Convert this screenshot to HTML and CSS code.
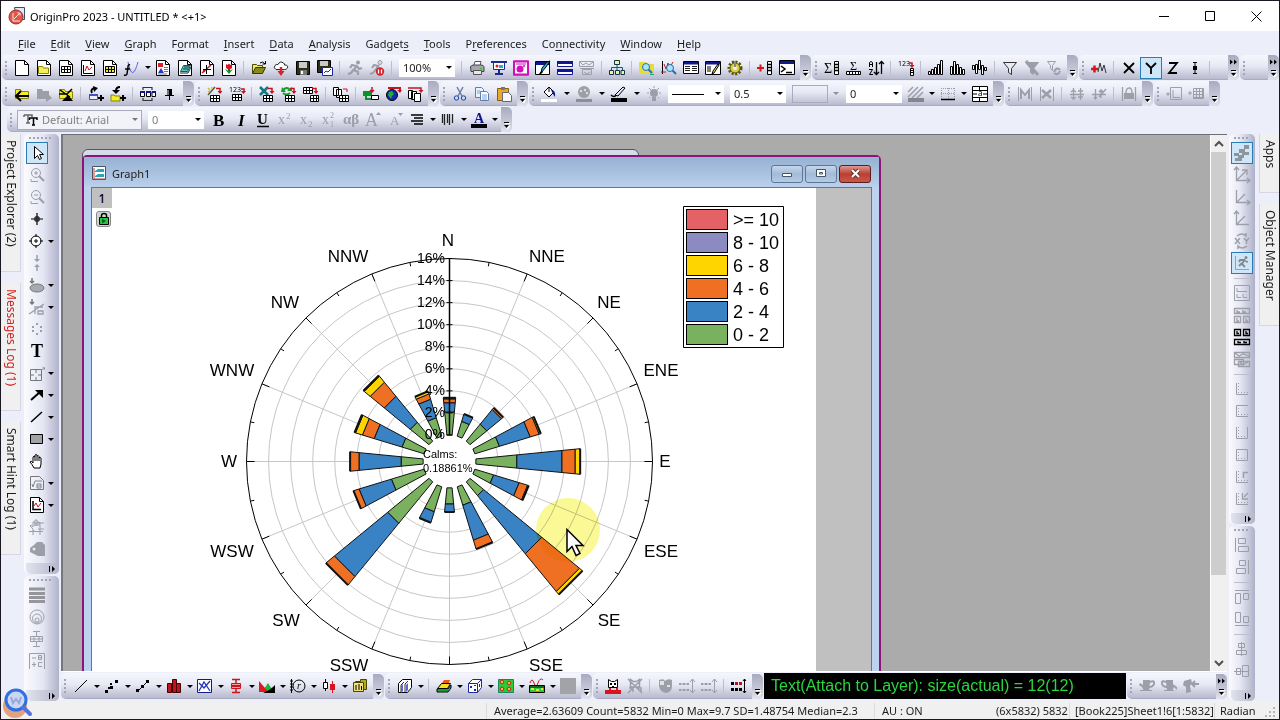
FILE: index.html
```html
<!DOCTYPE html>
<html lang="en">
<head>
    <meta charset="UTF-8">
    <meta name="viewport" content="width=device-width, initial-scale=1.0">
    <title>OriginPro 2023 - UNTITLED</title>
    <link rel="stylesheet" href="styles.css">
</head>
<body>

    <header class="titlebar">
        <svg class="app-icon" width="18" height="18" viewBox="0 0 18 18">
            <path d="M6.500.5h10v12h-8z" fill="#dfe8f4" stroke="#3c4a6c"/>
            <circle cx="8" cy="10" r="7" fill="#e2574c" stroke="#9c2a24"/>
            <path d="M5 6v8h7M6 12l6-6M9.500 6h2.500v2.500" fill="none" stroke="#ffe3df"/>
        </svg>
        <h1>OriginPro 2023 - UNTITLED * &lt;+1&gt;</h1>
        <div class="window-controls">
            <button type="button" aria-label="Minimize"><svg width="11" height="11"><path d="M0 5.500h10" stroke="#000"/></svg></button>
            <button type="button" aria-label="Maximize"><svg width="11" height="11"><path d="M.5.5h9v9h-9z" fill="none" stroke="#000"/></svg></button>
            <button type="button" aria-label="Close"><svg width="11" height="11"><path d="M.5.5l10 10M10.500.5l-10 10" stroke="#000"/></svg></button>
        </div>
    </header>

    <nav class="menubar">
        <a href="#"><u>F</u>ile</a>
        <a href="#"><u>E</u>dit</a>
        <a href="#"><u>V</u>iew</a>
        <a href="#"><u>G</u>raph</a>
        <a href="#">F<u>o</u>rmat</a>
        <a href="#"><u>I</u>nsert</a>
        <a href="#"><u>D</u>ata</a>
        <a href="#"><u>A</u>nalysis</a>
        <a href="#">Gadget<u>s</u></a>
        <a href="#"><u>T</u>ools</a>
        <a href="#">P<u>r</u>eferences</a>
        <a href="#">Co<u>n</u>nectivity</a>
        <a href="#"><u>W</u>indow</a>
        <a href="#"><u>H</u>elp</a>
    </nav>

    <section class="toolrows">
        <div class="toolrow">
            <div class="toolbar" role="toolbar" aria-label="Standard">
                <div class="tools" data-tools="new new-folder new-book new-graph new-matrix new-function~ new-layout new-notes digitize new-image | open open-cloud save save-as | run stop |"></div>
                <label class="combo"><select aria-label="Zoom"><option>100%</option></select></label>
                <div class="tools" data-tools="| print slideshow apps explorer tile split | hierarchy | find zoom-graph results edit-table gear | add-column command"></div>
                <button type="button" class="more" aria-label="More Standard tools"></button>
            </div>
            <div class="toolbar" role="toolbar" aria-label="Column">
                <div class="tools" data-tools="column-stats row-stats sort | set-values | bars-up bars-down bars-mixed | filter filter-off filter-again"></div>
                <button type="button" class="more" aria-label="More Column tools"></button>
            </div>
            <div class="toolbar" role="toolbar" aria-label="Axis">
                <div class="tools" data-tools="add-plot | axis-x axis-y* axis-z error-bar |"></div>
                <button type="button" class="more wide push" aria-label="More Axis tools"></button>
            </div>
            <div class="toolbar" role="toolbar" aria-label="Extra">
                <div class="tools stub"></div>
                <button type="button" class="more wide" aria-label="More Extra tools"></button>
            </div>
        </div>

        <div class="toolrow">
            <div class="toolbar" role="toolbar" aria-label="Navigate">
                <div class="tools" data-tools="back forward up-folder | move-up move-down | arrange pin"></div>
                <button type="button" class="more" aria-label="More Navigate tools"></button>
            </div>
            <div class="toolbar" role="toolbar" aria-label="Import">
                <div class="tools" data-tools="import-wizard import-ascii | import-excel reimport import-multi | copy-sheets | connect-file connect-web connect-many"></div>
                <button type="button" class="more" aria-label="More Import tools"></button>
            </div>
            <div class="toolbar" role="toolbar" aria-label="Edit">
                <div class="tools" data-tools="cut copy paste"></div>
                <button type="button" class="more" aria-label="More Edit tools"></button>
            </div>
            <div class="toolbar pickers" role="toolbar" aria-label="Style">
                <div class="tools" data-tools="fill-color~ palette~ line-color~ light"></div>
                <label class="combo line"><select aria-label="Line style"><option></option></select></label>
                <label class="combo"><select aria-label="Line width"><option>0.5</option></select></label>
                <label class="combo off"><select aria-label="Pattern" disabled><option></option></select></label>
                <label class="combo"><select aria-label="Pattern width"><option>0</option></select></label>
                <div class="tools tail" data-tools="hatch~ borders~ merge"></div>
                <button type="button" class="more" aria-label="More Style tools"></button>
            </div>
            <div class="toolbar" role="toolbar" aria-label="Mask">
                <div class="tools" data-tools="mask-range unmask | mask-in mask-out | lock-mask"></div>
                <button type="button" class="more" aria-label="More Mask tools"></button>
            </div>
            <div class="toolbar" role="toolbar" aria-label="Insert">
                <div class="tools" data-tools="insert-graph insert-sheet"></div>
                <button type="button" class="more" aria-label="More Insert tools"></button>
            </div>
        </div>

        <div class="toolrow format-row">
            <div class="toolbar" role="toolbar" aria-label="Format">
                <label class="combo font"><svg width="14" height="12" viewBox="0 0 14 12"><path d="M0 1h8v2M4 1v8M2 9h4M0 1v2" fill="none" stroke="#666" stroke-width="1.500"/><path d="M5 4h8v2M9.500 4v7M8 11h3M5.500 4v2" fill="none" stroke="#000" stroke-width="1.500"/></svg><select aria-label="Font"><option>Default: Arial</option></select></label>
                <label class="combo size"><select aria-label="Font size"><option>0</option></select></label>
                <div class="tools" data-tools="bold italic underline superscript subscript supersub greek larger smaller align~ orientation~ font-color~"></div>
                <button type="button" class="more" aria-label="More Format tools"></button>
            </div>
        </div>
    </section>

    <main class="workspace">
        <nav class="tabs left">
            <a href="#">Project Explorer (2)</a>
            <a href="#" class="alert">Messages Log (1)</a>
            <a href="#">Smart Hint Log (1)</a>
        </nav>

        <div class="dock left">
            <div class="toolbar vertical" role="toolbar" aria-label="Tools">
                <div class="tools" data-tools="pointer* zoom-in zoom-out crosshair target~ move-points select-oval~ select-line~ scatter-points text insert-object~ arrow~ line~ rectangle~ pan equation~ mini-graph~ pan-axis label"></div>
                <button type="button" class="more side" aria-label="More Tools"></button>
            </div>
            <div class="toolbar vertical fill" role="toolbar" aria-label="Gadget">
                <div class="tools" data-tools="bars-gray circles box-gray formula-gray"></div>
                <button type="button" class="more side" aria-label="More Gadget tools"></button>
            </div>
        </div>

        <div class="center">
            <div class="mdi-row">
                <div class="mdi">
                    <div class="child back-window"></div>
                    <section class="child graph-window">
                        <header class="child-title">
                            <svg width="15" height="15" viewBox="0 0 15 15"><path d="M.5.5h13v13h-13z" fill="#fff" stroke="#456"/><path d="M3 5l3-2h6v3H3z" fill="#22aab8"/><path d="M3 10l3-2h6v3H3z" fill="#22aab8"/><path d="M2 2v11M2 13h11" stroke="#c33"/></svg>
                            <h2>Graph1</h2>
                            <button type="button" aria-label="Minimize Graph1"><svg width="12" height="8"><path d="M1.500 3.500h9v3h-9z" fill="#fff" stroke="#456"/></svg></button>
                            <button type="button" aria-label="Maximize Graph1"><svg width="12" height="9"><path d="M1.500.5h9v7h-9zM4.500 3.500h3v1.500h-3z" fill="#fff" stroke="#456"/></svg></button>
                            <button type="button" class="close" aria-label="Close Graph1"><svg width="11" height="9"><path d="M2 1l7 7M9 1L2 8" stroke="#633" stroke-width="4"/><path d="M2 1l7 7M9 1L2 8" stroke="#fff" stroke-width="2"/></svg></button>
                        </header>
                        <div class="child-client">
                            <div class="sheet">
                                <div class="layer-bar">
                                    <button type="button" class="layer">1</button>
                                    <button type="button" class="lock" aria-label="Lock"><svg width="12" height="14"><path d="M3.500 6V3.500q0-2 2.500-2t2.500 2V6" fill="none" stroke="#000" stroke-width="1.500"/><path d="M1.500 5.500h9v7h-9z" fill="#2bc43a" stroke="#000"/><path d="M4 6.500l4 2.500-4 2.500z" fill="#063"/></svg></button>
                                </div>
                                <svg id="rose" class="rose" width="725" height="560" role="img" aria-label="Wind rose"></svg>
                            </div>
                        </div>
                    </section>
                </div>
                <div class="scrollbar">
                    <button type="button" aria-label="Scroll up"><svg width="10" height="8"><path d="M1 6l4-4 4 4" fill="none" stroke="#505050" stroke-width="2"/></svg></button>
                    <div class="thumb"></div>
                    <button type="button" aria-label="Scroll down"><svg width="10" height="8"><path d="M1 2l4 4 4-4" fill="none" stroke="#505050" stroke-width="2"/></svg></button>
                </div>
            </div>

            <div class="toolrow bottom">
                <div class="toolbar" role="toolbar" aria-label="2D Graphs">
                    <div class="tools" data-tools="plot-line~ plot-scatter~ plot-symbol~ plot-column~ plot-multi~ plot-box~ plot-area~ plot-polar~ plot-stock~ templates"></div>
                    <button type="button" class="more" aria-label="More 2D Graphs"></button>
                </div>
                <div class="toolbar" role="toolbar" aria-label="3D Graphs">
                    <div class="tools" data-tools="bars-3d~ | surface~ cube~ contour~ profile~ blank"></div>
                    <button type="button" class="more" aria-label="More 3D Graphs"></button>
                </div>
                <div class="toolbar" role="toolbar" aria-label="Mask Points">
                    <div class="tools" data-tools="mask-cat mask-cat-off | mask-face swap-a swap-b | swap-on"></div>
                    <button type="button" class="more" aria-label="More Mask Points"></button>
                </div>
                <output class="readout">Text(Attach to Layer): size(actual) = 12(12)</output>
                <div class="toolbar" role="toolbar" aria-label="Database">
                    <div class="tools" data-tools="cup-a cup-b cup-c"></div>
                    <button type="button" class="more wide push" aria-label="More Database"></button>
                </div>
            </div>
        </div>

        <div class="dock right">
            <div class="toolbar vertical" role="toolbar" aria-label="Graph">
                <div class="tools" data-tools="stairs* axes-both axes-x axes-y swap-xy speed* | layers-1 layers-2 layers-3 layers-4 | frame-l frame-c frame-u frame-d frame-i frame-s"></div>
                <button type="button" class="more side" aria-label="More Graph tools"></button>
            </div>
            <div class="toolbar vertical fill" role="toolbar" aria-label="Object Edit">
                <div class="tools" data-tools="align-left align-right | align-top align-bottom | align-center align-middle"></div>
                <button type="button" class="more side" aria-label="More Object Edit tools"></button>
            </div>
        </div>

        <nav class="tabs right">
            <a href="#">Apps</a>
            <a href="#">Object Manager</a>
        </nav>
    </main>

    <footer class="statusbar">
        <span class="stats">Average=2.63609 Count=5832 Min=0 Max=9.7 SD=1.48754 Median=2.3</span>
        <span class="units">AU : ON</span>
        <span class="cells">(6x5832) 5832</span>
        <span class="book">[Book225]Sheet1!6[1:5832]</span>
        <span class="angle">Radian</span>
        <svg class="grip" width="12" height="12"><path d="M8 0h2v2H8zM4 4h2v2H4zM8 4h2v2H8zM0 8h2v2H0zM4 8h2v2H4zM8 8h2v2H8z" fill="#b4b4b4"/></svg>
    </footer>

    <svg class="magnifier" width="32" height="32" viewBox="0 0 32 32">
        <circle cx="13" cy="19" r="12" fill="#e0a283"/>
        <circle cx="14" cy="13" r="10" fill="#c9d6f4" stroke="#2f6fe0" stroke-width="3"/>
        <path d="M9 10l2 6 3-4 3 4 2-6" fill="none" stroke="#9aa7d8" stroke-width="2"/>
        <path d="M22 21l6 6" stroke="#5674d8" stroke-width="4" stroke-linecap="round"/>
    </svg>

    <script src="icons.js"></script>
    <script src="rose.js"></script>
</body>
</html>
```
FILE: styles.css
```css
* {
    margin: 0;
    padding: 0;
    box-sizing: border-box;
}

body {
    font-family: 'Noto Sans', 'Open Sans', sans-serif;
    font-size: 12px;
    color: #1c1c1c;
    background: #eceefa;
    border: 1px solid #1a1720;
    height: 100vh;
    display: flex;
    flex-direction: column;
    overflow: hidden;
    position: relative;
}

button {
    font: inherit;
    border: none;
    background: none;
    display: flex;
    align-items: center;
    justify-content: center;
    flex: none;
}

a {
    color: inherit;
    text-decoration: none;
}

svg {
    display: block;
    flex: none;
    overflow: visible;
}

/* title bar */
.titlebar {
    height: 30px;
    flex: none;
    background: #fff;
    display: flex;
    align-items: center;
    padding-left: 7px;
    gap: 4px;
}

.titlebar h1 {
    font-size: 11px;
    font-weight: 400;
    color: #000;
    flex: 1;
}

.window-controls {
    display: flex;
}

.window-controls button {
    width: 46px;
    height: 29px;
}

/* menu */
.menubar {
    height: 24px;
    flex: none;
    display: flex;
    align-items: center;
    gap: 15px;
    padding-left: 17px;
    font-size: 11px;
}

.menubar u {
    text-underline-offset: 2px;
}

/* toolbars */
.toolrow {
    height: 26px;
    display: flex;
    gap: 1px;
    padding-left: 1px;
    flex: none;
}

.format-row {
    height: 27px;
    padding-left: 6px;
}

.toolbar {
    display: flex;
    align-items: center;
    height: 25px;
    flex: none;
    padding-left: 9px;
    border-radius: 5px;
    background: linear-gradient(#f6f7fd, #e6e8f4 45%, #b9bbcf 95%, #9fa1b8);
    position: relative;
}

.toolbar::before {
    content: '';
    position: absolute;
    left: 3px;
    top: 6px;
    width: 2px;
    height: 14px;
    background: repeating-linear-gradient(#a3a4b8 0 2px, transparent 2px 4px);
}

.tools {
    display: flex;
    align-items: center;
}

.tools.stub {
    width: 17px;
}

.tool {
    width: 22px;
    height: 22px;
    font-size: 16px;
}

.tool.active {
    background: #cfe6f8;
    border: 1px solid #2a7cb4;
}

.item {
    display: flex;
}

.drop {
    width: 9px;
}

.drop::after,
.combo::after {
    content: '';
    border: 3px solid transparent;
    border-top-color: #000;
    border-bottom: none;
}

.pickers .drop {
    width: 13px;
}

.pickers .tail .drop {
    width: 10px;
}

.separator {
    width: 1px;
    height: 14px;
    margin: 0 4px 0 3px;
    background: #bcbed0;
}

.more {
    width: 11px;
    height: 25px;
    margin-left: 2px;
    padding-bottom: 3px;
    align-items: flex-end;
    border-radius: 0 5px 5px 0;
    background: linear-gradient(#a9aac0, #c6c8d8 60%, #e2e3ee);
}

.more.wide {
    padding: 4px 0 3px;
    flex-direction: column;
    align-items: center;
    justify-content: space-between;
}

.more.push {
    margin-left: 14px;
}

.combo {
    width: 56px;
    height: 18px;
    background: #fff;
    display: flex;
    align-items: center;
    padding-right: 3px;
    margin: 0 3px;
}

.combo::after {
    margin-left: 2px;
    flex: none;
}

.combo select {
    appearance: none;
    flex: 1;
    width: 0;
    height: 18px;
    border: none;
    background: none;
    font: inherit;
    font-size: 11px;
    color: #1c1c1c;
    padding-left: 4px;
    opacity: 1;
}

.combo.line select {
    background: linear-gradient(#000, #000) 4px 9px / 32px 1px no-repeat;
}

.combo.off {
    width: 48px;
    background: none;
}

.combo.off select {
    flex: none;
    width: 36px;
    border: 1px solid #a9abbd;
}

.combo.off::after {
    margin-left: 5px;
    border-top-color: #8d8f9c;
}

.combo.font {
    width: 125px;
    height: 20px;
    background: #f2f3f8;
    border: 1px solid #a9abbd;
    margin: 0 3px 0 1px;
    padding-left: 6px;
}

.combo.font::after {
    border-top-color: #777;
}

.combo.font select,
.combo.size select {
    color: #808080;
}

.combo.size {
    margin-right: 4px;
}

/* workspace */
.workspace {
    flex: 1;
    min-height: 0;
    display: flex;
}

.tabs {
    width: 23px;
    flex: none;
    display: flex;
    flex-direction: column;
    align-items: flex-start;
    gap: 11px;
}

.tabs a {
    writing-mode: vertical-rl;
    width: 20px;
    line-height: 18px;
    padding: 6px 0 24px;
    background: #f0f0f1;
    border-right: 1px solid #d6d6e4;
    border-bottom: 1px solid #d6d6e4;
}

.tabs .alert {
    color: #d21f1f;
}

.tabs.right {
    width: 24px;
    align-items: flex-end;
    padding-left: 3px;
}

.tabs.right a {
    border-right: none;
    border-left: 1px solid #d6d6e4;
}

.dock {
    flex: none;
    display: flex;
    flex-direction: column;
    gap: 2px;
}

.dock.left {
    width: 37px;
}

.dock.right {
    width: 26px;
    margin-left: 2px;
}

.vertical {
    flex-direction: column;
    align-items: flex-start;
    width: 35px;
    height: auto;
    padding: 8px 0 0 2px;
    background: linear-gradient(90deg, #fbfbfe, #e4e6f3 55%, #b0b2ca);
}

.dock.right .vertical {
    width: 26px;
    background: linear-gradient(90deg, #fbfbfe, #e4e6f3 45%, #aeb0c8);
}

.vertical::before {
    left: 5px;
    top: 3px;
    width: 22px;
    height: 2px;
    background: repeating-linear-gradient(90deg, #a3a4b8 0 2px, transparent 2px 4px);
}

.dock.right .vertical::before {
    width: 15px;
}

.vertical .tools {
    flex-direction: column;
    align-items: flex-start;
}

.vertical .drop {
    width: 6px;
}

.vertical .separator {
    width: 16px;
    height: 1px;
    margin: 4px 3px 3px;
}

.vertical.fill {
    flex: 1;
}

.more.side {
    width: 100%;
    height: 11px;
    padding: 0 3px 0 0;
    margin: 3px 0 0;
    align-items: center;
    justify-content: flex-end;
    border-radius: 0 0 5px 5px;
    background: linear-gradient(90deg, #e2e3ee, #b4b6ca);
}

.fill .more.side {
    margin-top: auto;
}

.center {
    flex: 1;
    min-width: 0;
    display: flex;
    flex-direction: column;
}

.mdi-row {
    flex: 1;
    min-height: 0;
    display: flex;
    border-top: 1px solid #6d6d75;
    border-left: 2px solid #77777d;
}

.mdi {
    flex: 1;
    position: relative;
    overflow: hidden;
    background: #ababab;
}

.child {
    position: absolute;
}

.back-window {
    left: 19px;
    top: 14px;
    width: 557px;
    height: 40px;
    background: #d5dcea;
    border: 1px solid #55555f;
    border-radius: 6px 6px 0 0;
}

.graph-window {
    left: 19px;
    top: 20px;
    width: 799px;
    border: 2px solid #8c1478;
    border-radius: 5px 5px 0 0;
    background: #bcd2ee;
    padding: 0 7px;
}

.child-title {
    height: 30px;
    margin: 0 -7px;
    padding: 3px 8px 0;
    display: flex;
    align-items: center;
    gap: 2px;
    background: linear-gradient(#96b1d2, #bad0ec);
}

.child-title h2 {
    flex: 1;
    font-size: 11px;
    font-weight: 400;
    padding-left: 3px;
}

.child-title button {
    width: 32px;
    height: 18px;
    border: 1px solid #5f7796;
    border-radius: 3px;
    background: linear-gradient(#c5d7ec, #a3bbd8 50%, #b4cbe6);
}

.child-title .close {
    border-color: #5a1f1c;
    background: linear-gradient(#dd9a90, #b93f33 50%, #c9584a);
}

.child-client {
    background: #c0c0c0;
    border: 1px solid #6c7480;
    padding-right: 55px;
}

.sheet {
    background: #fff;
    position: relative;
}

.layer-bar {
    position: absolute;
    left: 0;
    top: 0;
}

.layer {
    width: 20px;
    height: 20px;
    background: #c0c0c0;
    color: #000;
    font-weight: 500;
}

.lock {
    width: 15px;
    height: 16px;
    margin: 3px 0 0 4px;
    border: 1px solid #888;
    border-radius: 3px;
    background: #cfd6cf;
}

.rose {
    width: 100%;
    font-family: 'Liberation Sans', Arial, sans-serif;
    fill: #000;
}

.compass {
    font-size: 17px;
    text-anchor: middle;
}

.scale {
    font-size: 14px;
    text-anchor: end;
}

.calms {
    font-size: 11px;
}

.legend {
    font-size: 18px;
}

.halo {
    fill: #fbf996;
    mix-blend-mode: multiply;
}

.scrollbar {
    width: 17px;
    background: #f0f0f0;
    border-left: 1px solid #fff;
    display: flex;
    flex-direction: column;
}

.scrollbar button {
    height: 17px;
}

.thumb {
    height: 79%;
    background: #cdcdcd;
    margin: 0 1px 0 0;
}

.scrollbar button:last-child {
    margin-top: auto;
}

/* graph toolbars under the workspace */
.bottom {
    height: 30px;
    padding: 1px 0 0;
    border-top: 1px solid #fff;
}

.bottom .toolbar {
    height: 26px;
}

.readout {
    flex: 1;
    height: 26px;
    background: #000;
    color: #2bd53f;
    font: 16px/26px 'Liberation Sans', Arial, sans-serif;
    padding-left: 7px;
    white-space: nowrap;
    overflow: hidden;
}

/* status bar */
.statusbar {
    height: 18px;
    flex: none;
    background: #f0f0f0;
    display: flex;
    align-items: center;
    justify-content: flex-end;
    font-size: 11px;
    white-space: nowrap;
    padding-top: 1px;
}

.statusbar span {
    border-left: 1px solid #dcdcdc;
    padding-left: 5px;
    line-height: 16px;
}

.statusbar .stats {
    width: 388px;
    padding-left: 7px;
}

.statusbar .units {
    width: 117px;
    padding-left: 7px;
}

.statusbar .cells {
    width: 78px;
    border: none;
}

.statusbar .book {
    width: 145px;
}

.statusbar .angle {
    width: 48px;
}

.grip {
    margin: 4px 2px 0 3px;
}

.magnifier {
    position: absolute;
    left: 1px;
    bottom: 0;
}
```
FILE: icons.js
```js
// 16x16 toolbar icons, drawn from a few small helpers
const GRAY = '#9c9ea8';
const line = (d, c = '#000', w = 1) => `<path d="${d}" fill="none" stroke="${c}" stroke-width="${w}"/>`;
const area = (d, c = '#000', s = 'none') => `<path d="${d}" fill="${c}" stroke="${s}"/>`;
const dot = (x, y, r, c, s = 'none') => `<circle cx="${x}" cy="${y}" r="${r}" fill="${c}" stroke="${s}"/>`;
const text = (t, x, y, size, c = '#000', extra = '') => `<text x="${x}" y="${y}" font-size="${size}" fill="${c}" ${extra}>${t}</text>`;
const serif = 'font-family="Liberation Serif" ';
const grid = (x, y, w, h, c = '#000', bg = '#fff') => {
    let d = `M${x} ${y}h${w}v${h}h-${w}z`;
    for (let i = 3; i < w; i += 3) d += `M${x + i} ${y}v${h}`;
    for (let i = 3; i < h; i += 3) d += `M${x} ${y + i}h${w}`;
    return area(d, bg, c);
};
const doc = area('M1.500.5h9l4 4v11h-13z', '#fff', '#000') + line('M10.500.5v4h4');
const redArrow = line('M9 2.500h4v4', '#c8141c', 1.500) + area('M10.500 5h5L13 8z', '#c8141c');
const lens = (x, y, c = '#1f6fc0') => dot(x, y, 3.500, '#a9e4f0', c) + line(`M${x + 2.500} ${y + 2.500}l3.500 3.500`, c, 2);
const folder = (c, s = '#8a8400') => area('M1.500 3.500h5l1 2h7v7h-13z', c, s);
const plus = (x, y, c = '#000', w = 2) => line(`M${x - 3} ${y}h6M${x} ${y - 3}v6`, c, w);

const icons = {
    'new': doc,
    'new-folder': doc + area('M2.500 6.500h4l1 1.500h5v5.500h-10z', '#f4ee5a', '#8a8400'),
    'new-book': doc + grid(3.500, 6.500, 9, 6),
    'new-graph': doc + line('M3.500 5v8.500h9') + line('M5 11l2-5 2 4 3-3', '#c8141c'),
    'new-matrix': doc + grid(3.500, 6.500, 9, 6, '#000', '#f1e83c'),
    'new-function': line('M4 2c3 14 6 14 10 0', '#5560d8') + line('M6 5q-2-1-2 2l-1 7q-1 2-3 1M1 9h5', '#000', 1.500),
    'new-layout': doc + area('M3 3h5v4H3z', '#d8202a') + area('M3 13l3-5 3 5z', '#2a35c8') + line('M9 7.500h4M9 9.500h4M9 11.500h4M3 14h9', '#777'),
    'new-notes': doc + area('M3.500 11.500l3-6h7l-3 6z', '#6cc8cf', '#064') + line('M6 9h5M7 7h5M3 13h8l3-6', '#134'),
    'digitize': doc + line('M3 13L12 5', '#c8141c', 1.500) + line('M7.500 5v9M4 9.500h8') + dot(5, 11, 1.200, '#c8141c'),
    'new-image': doc + line('M8 8v5', '#080', 2) + area('M4 9l4 5 4-5-4 2z', '#109020') + area('M5 4l1.500 1L8 3.500 9.500 5 11 4v4l-3 2-3-2z', '#d8142a'),
    'open': area('M1.500 13.500v-9h4l1 1h5v3', '#f0ea70', '#4a4a00') + area('M1.500 13.500l3-6h10l-3 6z', '#8a8a1c', '#3a3a00') + line('M9 3q3-2.500 5 1M14.500 1v3h-3'),
    'open-cloud': area('M3 9.500Q0 8 2 5.500 3 4 5 4.500 7 .5 10.500 3q1.500 1 1 2 4 0 3 3-1 1.500-3 1.500z', '#fff', '#222') + line('M8 7v7', '#d8202a', 2.500) + area('M4.500 11h7L8 16z', '#d8202a'),
    'save': area('M1.500 1.500h13v13h-13z', '#2d3014', '#000') + area('M4 2h8v6H4z', '#c8cacc') + area('M5 10h7v5H5z', '#777') + area('M6 11h2v3H6z', '#fff'),
    'save-as': area('M.5.5h13v12h-13z', '#2d3014', '#000') + area('M3 1h8v5H3z', '#c8cacc') + area('M5.500 7.500h10v8h-10z', '#fff', '#1b2aa0') + line('M7 13l2-2 2 1 3-3', '#1b2aa0'),
    'run': dot(11, 2.500, 2, GRAY) + line('M10 5L7 10l4 2v3M7 9l-3 4-3 1M9 6L5 5 3 8M10 6l2 3 3-1', GRAY, 2.200),
    'stop': dot(11, 2.500, 2, '#ddd', GRAY) + line('M10 5L7 9l-3 4-3 1M9 6L5 5 3 8', GRAY, 2) + dot(11, 11.500, 4.200, '#d8202a') + line('M9.500 9.500v4M12.500 9.500v4', '#fff', 1.300),
    'print': area('M4.500 6L6 1.500h6L11 6z', '#fff', '#555') + area('M1.500 6.500L4 5h9l2 1.500v5h-13z', '#a5a7ad', '#444') + area('M4.500 10.500h8v4h-8z', '#e8e8ea', '#555') + area('M11 8h2v1h-2z', '#1c1'),
    'slideshow': line('M0 2h16', '#1b2a90', 2) + area('M2.500 2.500h11v7h-11z', '#fff', '#1b2a90') + dot(6, 6, 1.500, '#d8202a') + area('M8 5h4v3H8z', '#28b0c8') + line('M8 10v3M4 14h8', '#1b2a90', 2),
    'apps': area('M1 1h14v14H1z', '#fff', '#d010b8') + line('M1 1.500h14v13H1z', '#d010b8', 2) + dot(7, 9, 3.500, '#d010b8') + dot(11, 6, 1, '#d010b8') + line('M3 4h10', '#d010b8'),
    'explorer': area('M.5 1.500h14v13H.5z', '#fff', '#000') + area('M1 2h13v3H1z', '#10188c') + area('M15 1l-4 6-5 6 1-5 5-6z', '#28b0c8', '#000') + area('M4 14q2-4 4-2l-2 2z'),
    'tile': area('M.5 1.500h15v5H.5zM.5 9.500h15v5H.5z', '#fff', '#10188c') + area('M0 1h16v3H0zM0 9h16v3H0z', '#10188c'),
    'split': line('M.5 1.500h14v5H.5zM3.500 9.500h9v5h-9zM1 2l3 3 3-2 3 2 4-3M1 8.500h14M5 12l3 2 3-2', GRAY),
    'hierarchy': area('M5.500.5h5v4h-5zM.5 10.500h4v4h-4zM6.500 10.500h4v4h-4zM12 10.500h3.500v4H12z', '#e8f6a0', '#134') + line('M8 5v5M2.500 10V7.500h11V10', '#067'),
    'find': area('M0 2h7l1 2h7v10H0z', '#e6dc38') + lens(7, 7) + area('M11 14h4v1h-4z', '#1a7'),
    'zoom-graph': line('M1.500 1v13') + line('M3 4l2 5 2-6 2 4 3-5', '#c8141c') + lens(9, 8) + line('M0 12h5', '#c8141c'),
    'results': area('M.5 1.500h15v12H.5z', '#fff', '#000') + area('M1 2h14v2.500H1z', '#10188c') + line('M2 6.500h5M9 6.500h5M2 8.500h5M9 8.500h5M2 10.500h5M9 10.500h5', '#222'),
    'edit-table': area('M.5 1.500h15v13H.5z', '#fff', '#000') + area('M1 2h14v2.500H1z', '#10188c') + line('M2 7h4M2 9h4M2 11h4') + area('M14 5l-5 8-2 1 1-3 5-7z', '#f0d840', '#000'),
    'gear': `<circle cx="8" cy="8" r="6" fill="none" stroke="#5a5600" stroke-width="3" stroke-dasharray="2 1.500"/>` + dot(8, 8, 5, '#d8d040', '#5a5600') + dot(8, 8, 2, '#eef') + area('M7 1h2v6H7z', '#888'),
    'add-column': line('M0 8h7M3.500 4.500v7', '#d8141c', 2) + area('M10.500 1.500h4v13h-4z', '#fff', '#000') + line('M10 4.500h5M10 7.500h5M10 10.500h5', '#000', 1.500),
    'command': area('M.5.5h15v14H.5z', '#fff', '#000') + area('M1 1h14v3H1z', '#10188c') + line('M2 6l4 3-4 3M7 12.500h6', '#000', 1.500),

    'column-stats': text('Σ', 0, 13, 14, '#000', serif) + area('M10.500 1.500h4v13h-4z', '#fff', '#000') + line('M10 4.500h5M10 7.500h5M10 10.500h5', '#000', 1.500),
    'row-stats': text('Σ', 4, 10, 12, '#000', serif) + area('M.5 11.500h14v3H.5z', '#fff', '#000') + line('M3.500 11v4M6.500 11v4M9.500 11v4M12.500 11v4'),
    'sort': line('M1.500 7V2.500l1.500-1 1.500 1V7M1 4.500h4M1 9.500h3.500L1.500 14.500H5') + line('M8.500 2v12M6 12l2.500 2.500L11 12M13.500 14V2M11 4l2.500-2.500L16 4', '#000', 1.300),
    'set-values': text('123', 0, 6, 7) + line('M11 3h3v4', '#c8141c', 1.500) + area('M11.500 5h5L14 8z', '#c8141c') + area('M12.500 8.500h3v7h-3z', '#fff', '#000') + line('M12 10.500h4M12 12.500h4', '#000'),
    'bars-up': area('M.5 11.500h2v3h-2zM3.500 9.500h2v5h-2zM6.500 7.500h2v7h-2zM9.500 4.500h2v10h-2zM12.500.5h2v14h-2z', '#fff', '#000'),
    'bars-down': area('M.5 6.500h2v8h-2zM3.500 1.500h2v13h-2zM6.500 4.500h2v10h-2zM9.500 7.500h2v7h-2zM12.500 9.500h2v5h-2z', '#fff', '#000'),
    'bars-mixed': area('M.5 5.500h2v4h-2zM3.500 4.500h2v9h-2zM6.500.5h2v9h-2zM9.500 5.500h2v9h-2zM12.500 7.500h2v3h-2z', '#fff', '#000'),
    'filter': area('M1.500 2.500h13l-5 6v6l-3-2v-4z', '#e9ebf2', '#333'),
    'filter-off': area('M1.500 2.500h13l-5 6v6l-3-2v-4z', GRAY, GRAY) + line('M2 1l12 14', '#9c9ea8', 3),
    'filter-again': line('M1.500 1.500h8l-3 4v5l-2-2v-3z', GRAY) + line('M8 12q3-6 6-2M14 11q-2 5-6 2', GRAY, 2),

    'add-plot': line('M0 9h7M3.500 5.500v7', '#d8141c', 2.500) + line('M7 12l2-9 2 8 2-6 2 8', '#333'),
    'axis-x': line('M3 3l10 10M13 3L3 13', '#000', 1.800),
    'axis-y': line('M3 3l5 5 5-5M8 8v6', '#000', 1.800),
    'axis-z': line('M4 3h8L4 13h8', '#000', 1.800),
    'error-bar': line('M8 2v11M6 2.500h4M6 13.500h4', '#000') + area('M6 6h4v4H6z'),

    'back': folder('#f3ee2c') + line('M2 10h13M7 5l-5 5 5 5', '#000', 2),
    'forward': area('M1 3h5l1 2h6v4l3 3-6 4v-3H1z', GRAY),
    'up-folder': folder('#f3ee2c') + line('M2 4l10 7M14 3l-5 5H1', '#000', 1.500) + area('M4 15h11l-5-6z'),
    'move-up': line('M4 7q-2-4 3-5', '#000', 2) + area('M5 0l5 2-4 4z') + area('M1.500 8.500h8v5h-8z', '#eef', '#556') + area('M1 8h9v2H1z', '#4452c0') + plus(13, 12),
    'move-down': line('M10 1q-4 0-4 4', '#000', 2) + area('M2 4h8L6 8z') + area('M1 9h3l1 1h5v5H1z', '#f3ee2c', '#8a8400') + plus(13, 12),
    'arrange': area('M.5 5.500h4v5h-4zM6.500 5.500h4v5h-4zM12 5.500h3.500v5H12z', '#fff', '#000') + area('M0 5h5v2H0zM6 5h5v2H6zM12 5h4v2h-4z', '#10188c') + line('M3 4V1.500h9V4M3 12v2.500h9V12', '#333', 1.200),
    'pin': line('M5 3.500h5M6 4v5M3 9.500h9M7.500 10v4') + area('M7 3h3v7H7z'),
    'import-wizard': line('M1 9l7-8', '#555', 1.500) + line('M1 2l2 2M1 6l2-1M5 1v2', '#d0c020', 1.500) + redArrow + grid(3.500, 9.500, 9, 6),
    'import-ascii': text('123', 0, 6, 7) + line('M12 3h3v2', '#c8141c', 1.500) + area('M12 5h5l-2.500 3z', '#c8141c') + grid(3.500, 8.500, 9, 6),
    'import-excel': line('M1 1l8 8M9 1L1 9', '#157880', 2.500) + redArrow + grid(4.500, 9.500, 9, 6),
    'reimport': line('M2 4q4-4 7 0M9 7q-4 3-7 0', '#12a02a', 2) + area('M0 6h5L1 1zM6 5h5v-4z', '#12a02a') + redArrow + grid(4.500, 9.500, 9, 6),
    'import-multi': grid(.5, 1.500, 9, 6) + redArrow + grid(7.500, 9.500, 8, 6),
    'copy-sheets': area('M.5 1.500h5v8h-5zM3.500 3.500h5v8h-5z', '#fff', '#000') + line('M10 3h4v3', '#c8141c') + grid(6.500, 9.500, 9, 6),
    'connect-file': area('M0 5h9v5H0z', '#10902a') + line('M3 10v3h6', '#10902a', 2) + area('M8.500 9.500h7v4h-7z', '#fff', '#000') + line('M9 5V1M7 4l2 2 2-2', '#c8141c', 1.500),
    'connect-web': dot(7, 9, 5.500, '#1828b0', '#000') + area('M4 6l3-1 2 3-2 2-1 3-3-4z', '#19b038') + line('M3 2h12v3', '#c8141c', 2) + area('M12 4h5l-2 3z', '#c8141c'),
    'connect-many': area('M1.500 4.500h4v8h-4zM4.500 5.500h5v8h-5z', '#fff', '#000') + area('M7.500 7.500h6v8h-6z', '#fff', '#000') + line('M1 2h13v3', '#c8141c', 1.500) + area('M11.500 4h5L14 7z', '#c8141c'),
    'cut': line('M5 1l5 9M11 1L6 10', '#6a7fa8', 1.500) + dot(4.500, 12, 2.200, 'none', '#1848a8') + dot(11.500, 12, 2.200, 'none', '#1848a8'),
    'copy': area('M1.500 1.500h6l2 2v8h-8z', '#eaf2fc', '#5b7fb0') + area('M6.500 5.500h6l2 2v7h-8z', '#fff', '#5b7fb0') + line('M8 9h5M8 11h5M8 13h5M3 5h3M3 7h3', '#7aa2d0'),
    'paste': area('M1.500 2.500h11v12h-11z', '#e8a830', '#8a5c10') + area('M5 1h4v3H5z', '#777') + area('M6.500 6.500h6l3 3v6h-9z', '#f6f8fc', '#667'),

    'fill-color': area('M3 6l5-5 5 5-5 5z', '#fff', '#000') + line('M8 1v5', '#000') + area('M10 4q5 0 4 7l-2-3z', '#10188c') + area('M0 13h16v3H0z', '#fff'),
    'palette': dot(8, 6, 6, GRAY) + dot(5, 5, 1.200, '#ddd') + dot(9, 4, 1.200, '#ddd') + dot(11, 7, 1.200, '#ddd') + area('M0 13h16v3H0z', '#8c8e98'),
    'line-color': line('M4 9L12 1l2 1-7 8z') + line('M0 9q3 3 5 0', '#000', 1.500) + area('M0 12h16v4H0z'),
    'light': dot(8, 7, 4, GRAY) + area('M6 11h4v4H6z', GRAY) + line('M8 0v2M1 7h2M13 7h2M3 2l2 2M13 2l-2 2M3 12l1-1M13 12l-1-1', GRAY),
    'hatch': line('M0 6l5-5M0 11L10 1M4 12L15 1M9 12l6-6', GRAY, 1.500) + area('M0 12h16v4H0z', '#84868e'),
    'borders': `<path d="M1 2.500h14M1 7.500h14M1.500 2v11M8.500 2v11M14.500 2v11" stroke="#9a9ca8" stroke-dasharray="1 1"/>` + line('M1 13.500h14', '#000', 1.500),
    'merge': area('M.5.5h15v15H.5z', '#fff', '#000') + line('M0 4.500h16M0 11.500h16M7.500 0v4M7.500 12v4M1 8h4M11 8h4') + text('a', 6, 10, 8),
    'mask-range': line('M1.500 1v14M14.500 1v14', GRAY) + line('M4 13V4l4 5 4-5v9', GRAY, 2),
    'unmask': line('M1.500 1v14M14.500 1v14', GRAY) + line('M3 4l9 8M12 4l-9 8', GRAY, 2.500),
    'mask-in': line('M4.500 2v12M1 8.500h14M11.500 2v12M2 6l2.500-2L7 6M2 11l2.500 2L7 11M9 5h5M9 11h5', GRAY, 1.300),
    'mask-out': line('M4.500 3v11M1 8.500h14M10 3v9M8 6l2-2 2 2M8 11l7-8M3 11l1.500 2L6 11', GRAY, 1.300),
    'lock-mask': line('M1.500 1v14M14.500 1v14M5 7q0-5 3-5t3 5', GRAY, 1.300) + area('M3 7h10v6H3z', GRAY),
    'insert-graph': line('M0 8h4M2 6v4', GRAY) + line('M4.500 1.500h11v12h-11zM7 4v7.500h7', GRAY),
    'insert-sheet': line('M0 7h4M2 5v4', GRAY) + grid(5.500, 2.500, 10, 10, GRAY, 'none'),

    'bold': text('B', 2, 14, 17, '#000', serif + 'font-weight="bold"'),
    'italic': text('I', 5, 14, 17, '#000', serif + 'font-weight="bold" font-style="italic"'),
    'underline': text('U', 2, 12, 15, '#000', serif + 'font-weight="bold"') + line('M2 14.500h12', '#000', 1.500),
    'superscript': text('x', 1, 12, 14, GRAY, serif) + text('2', 9, 7, 9, GRAY, serif),
    'subscript': text('x', 1, 12, 14, GRAY, serif) + text('2', 9, 15, 9, GRAY, serif),
    'supersub': text('x', 1, 12, 14, GRAY, serif) + text('2', 9, 6, 8, GRAY, serif) + text('1', 9, 15, 8, GRAY, serif),
    'greek': text('αβ', 0, 12, 15, GRAY, serif + 'font-weight="bold"'),
    'larger': text('A', 0, 14, 18, GRAY, serif) + area('M11 3l2.500-3L16 3z', GRAY),
    'smaller': text('A', 3, 13, 13, GRAY, serif) + area('M11 1h5l-2.500 3z', GRAY),
    'align': line('M2 3h12M5 6h9M2 9h12M5 12h9', '#000', 1.500),
    'orientation': line('M2.500 2v9M4.500 2v11M7.500 2v9M9.500 2v11M12.500 2v9', '#222', 1.300),
    'font-color': text('A', 3, 11, 14, '#10188c', serif + 'font-weight="bold"') + area('M0 12h16v4H0z'),

    'pointer': area('M5.500 1.500v12l3-3 2 4 2-1-2-4h4z', '#fff', '#000'),
    'zoom-in': dot(7, 6, 4.500, 'none', GRAY) + line('M5 6h4M7 4v4', GRAY) + line('M10 9l5 5', GRAY, 2) + line('M2 12v2.500h7', GRAY),
    'zoom-out': dot(7, 6, 4.500, 'none', GRAY) + line('M5 6h4', GRAY) + line('M10 9l5 5', GRAY, 2) + line('M2 12v2.500h7', GRAY),
    'crosshair': line('M2 8h12M8 2v12', '#000', 1.200) + line('M6 6h4v4H6z'),
    'target': dot(7, 8, 5, '#fff', '#000') + line('M0 8h3M11 8h3M7 1v3M7 12v3M5 8h4M7 6v4', '#000'),
    'move-points': line('M8 0v5M8 16v-5', GRAY, 1.500) + area('M5 4h6L8 7zM5 12h6L8 9z', GRAY),
    'select-oval': `<ellipse cx="8" cy="11" rx="7" ry="4" fill="#a8aab2" stroke="#777"/>` + line('M3 1v5M1 4l2 2 2-2', '#777', 1.500),
    'select-line': line('M0 15L15 5M6 15V8h8M9 12h5v3H9z', GRAY, 1.300) + line('M3 0v5M1 3l2 2 2-2', '#777', 1.500),
    'scatter-points': area('M7 2h2v2H7zM3 5h2v2H3zM11 5h2v2h-2zM3 9h2v2H3zM11 9h2v2h-2zM7 12h2v2H7z', GRAY),
    'text': text('T', 2, 14, 18, '#000', serif + 'font-weight="bold"'),
    'insert-object': line('M1.500 4.500h11v11h-11zM7 5v3M2 10h3M7 15v-3M12 10H9', '#777') + text('a', 13, 5, 6, '#777'),
    'arrow': line('M2 13L11 5', '#000', 2) + area('M6 3h8v8z'),
    'line': line('M2 13L13 3', '#000', 1.500),
    'rectangle': area('M1.500 3.500h12v9h-12z', '#a0a2a6', '#000'),
    'pan': area('M5 15q-2-4-4-6 1-2 3 1V4q1-1.500 2 0V2q1.500-1 2 0v1q1.500-1 2 .5v1q1.500-.5 2 .5v6l-1 4z', '#fff', '#000') + line('M6 4v4M8 3v5M10 4v4'),
    'equation': line('M1.500 1.500h9l4 4v9h-13z', '#777') + line('M3 9l1 3 2-6h7M8 9h4v4H8zM8 11h4', '#888'),
    'mini-graph': doc + line('M4 4v8.500h8', '#000', 1.500) + line('M5 9l2-3 2 4 3-4', '#c8141c'),
    'pan-axis': line('M5 12Q3 8 1 7q1-2 3 1V3h2v4V1h2v6V3h2v4M0 12.500h14M4 11v5M11 3v13M9 4h6M9 10h6', GRAY),
    'label': area('M5 4l3-3h5l3 3v11H9L1 11V7z', GRAY) + dot(5, 8, 1.500, '#e8eaf2'),
    'bars-gray': line('M0 2h16M0 6.500h16M0 10.500h16M0 14.500h16', '#94969c', 3),
    'circles': dot(8, 8, 7, 'none', GRAY) + dot(8, 9.500, 4.500, 'none', GRAY) + dot(8, 11, 2, 'none', GRAY),
    'box-gray': line('M4 .5h7M7.500 1v4M1.500 5.500h12v5h-12zM1 8h13M5 5v6M10 5v6M7.500 11v4M4 15.500h7', GRAY),
    'formula-gray': line('M.5 16V.5h15V16M3 5h4M5 9v5M3 11.500h4', GRAY) + line('M9.500 2.500h3v4h-3zM9 4.500h4M13 9.500H9.500v4H13', GRAY),

    'plot-line': line('M2 14L14 2', '#000'),
    'plot-scatter': area('M1 12h3v3H1zM6 8h3v3H6zM6 5h2v2H6zM11 2h3v3h-3zM4 9h2v2H4z'),
    'plot-symbol': line('M2 14L14 2') + area('M1 11h3v3H1zM6 7h3v3H6zM11 2h3v3h-3z'),
    'plot-column': area('M1.500 5.500h4v9h-4zM6.500 1.500h4v13h-4zM10.500 5.500h4v9h-4z', '#c0141c', '#400'),
    'plot-multi': area('M.5 1.500h14v13H.5z', '#fff', '#10188c') + line('M2 13l5-9 6 9M2 5l5 5 6-7', '#2333c0', 1.300),
    'plot-box': line('M4 1.500h8M8 2v3M8 11v3M4 14.500h8', '#c8141c', 1.500) + area('M3.500 5.500h9v5h-9z', '#f3a5a5', '#c8141c') + line('M3 8h10', '#c8141c', 2),
    'plot-area': area('M0 14V3l6 7 3-4 6 8z', '#e01820') + area('M6 10l3-5 4 7-4 2z', '#18b838') + area('M4 15l6-3 4-3 2-2v8z'),
    'plot-polar': dot(9, 8, 6, 'none', '#000') + line('M1.500 1v14M0 3h3M0 6h3M0 9h3M0 12h3') + text('r', 7, 11, 10, '#000', serif + 'font-style="italic"'),
    'plot-stock': line('M4.500 1v12') + area('M2.500 4.500h4v6h-4z', '#fff', '#000') + line('M11.500 3v12', '#d8141c') + area('M9 6h5v6H9z', '#d8141c'),
    'templates': area('M3.500 3.500h5v-2h6v10h-11z', '#b4a828', '#4a4600') + area('M1.500 4.500h10v9h-10z', '#f0e47a', '#4a4600') + line('M4 12V7M7 12V6M9.500 12V8'),
    'bars-3d': area('M1.500 5.500l4-4h9v8l-4 5h-9z', '#fff', '#000') + line('M4 14V7l3-3M8 14V6l3-3', '#333') + area('M4 8l2-2v7l-2 2zM9 7l2-2v7l-2 2z', '#5a66d0'),
    'surface': area('M1.500 10.500l4-5h9l-3 5z', '#f2e21c', '#000') + area('M6 5l2-3h6l-1 3z', '#e85a20') + area('M1 11h11l3-4v3l-3 4H1z', '#28b0c8', '#000') + line('M2 12h10', '#12a02a', 2),
    'cube': area('M1.500 5.500l4-4h9v8l-4 5h-9z', '#fff', '#1c2a9c') + line('M1.500 5.500h9v9M10.500 5.500l4-4', '#1c2a9c') + area('M3 8h2v2H3zM7 11h2v2H7zM7 7h2v1H7zM12 6h1v3h-1z', '#1c2a9c'),
    'contour': area('M.5 1.500h15v13H.5z', '#2ccc38', '#186') + dot(4, 4, 1.800, '#f0c030', '#c22') + dot(11, 5, 1.800, '#f0c030', '#c22') + dot(4, 11, 1.800, '#f0c030', '#c22') + dot(11, 11, 1.800, '#f0c030', '#c22'),
    'profile': line('M1 5q2-6 4 0t4 0 5-3', '#c8141c') + area('M.5 7.500h15v7H.5z', '#2ccc38', '#000') + area('M2 10h3v2H2zM7 11h3v2H7zM12 10h2v2h-2z', '#f0e030') + line('M0 9h16'),
    'blank': area('M0 0h16v16H0z', '#a2a3a8'),
    'mask-cat': area('M3.500 9.500v-8l3 2h3l3-2v8z', '#fff', '#000') + area('M5 5h2v2H5zM9 5h2v2H9zM7 8h2v2H7z') + area('M0 12h4v-2h2v2h5v-2h2v2h3v4H0z', '#d8141c'),
    'mask-cat-off': line('M3.500 9V1.500l3 2h3l3-2V9zM1 1l14 14M15 1L1 15M2 10h4v4M10 10h4v4', GRAY, 1.500),
    'mask-face': area('M2 2q5-2 6 1 3-3 7-1v6q0 6-6 7-6-1-7-7z', GRAY) + area('M3 3h4v4H3zM10 7h3v2h-3z', '#e0e1ea'),
    'swap-a': area('M0 5h2v2H0zM4 5h2v2H4zM8 5h2v2H8zM0 11h2v2H0zM4 11h2v2H4zM8 11h2v2H8z', GRAY) + line('M2 6h8M0 12h8M13.500 1v14M11 4l2.500-3L16 4M11 12l2.500 3L16 12', GRAY),
    'swap-b': area('M0 5h2v2H0zM4 5h2v2H4zM8 5h2v2H8zM0 11h2v2H0zM4 11h2v2H4zM8 11h2v2H8z', GRAY) + line('M2 6h8M0 12h8M13.500 1v14M11 4l2.500-3L16 4M11 12l2.500 3L16 12', GRAY),
    'swap-on': area('M0 4h3v3H0zM0 10h3v3H0zM4 10h3v3H4zM8 10h3v3H8z') + area('M4 4h3v3H4zM8 4h3v3H8z', '#b0141c') + line('M13.500 1v14M12 3l1.500-2L15 3M12 13l1.500 2 1.500-2'),
    'cup-a': area('M4 2h7v2l-1 9H5L3 9 0 7l1-2 3 2z', GRAY) + line('M11 4q5-2 4 2-1 3-5 3', GRAY, 2) + line('M1 12.500h12', GRAY),
    'cup-b': area('M12 2H5v2l1 9h5l2-4 3 3 0-3-4-3z', GRAY) + line('M5 4Q0 2 1 6q1 3 5 3', GRAY, 2) + line('M3 12.500h10', GRAY),
    'cup-c': area('M1 3l7-2 1 4-2 3 1 6-5 1V9L0 7z', GRAY) + line('M16 6H9M12 3L9 6l3 3', GRAY, 2),

    'stairs': area('M10 0h5v4h-5zM5 4h6v4H5zM0 8h5v3H0zM8 7h7v3H8zM4 10h6v3H4zM1 13h7v3H1z', '#8c949c'),
    'axes-both': line('M2.500 1v12.500H15M0 3l2.500-3L5 3M13 11l3 2.500L13 16M3 13l9-9M8 3h5v5', GRAY, 1.300),
    'axes-x': line('M2.500 1v12.500H15M13 11l3 2.500L13 16M3 13l8-8', GRAY, 1.300),
    'axes-y': line('M2.500 1v12.500H15M0 3l2.500-3L5 3M3 13l8-8', GRAY, 1.300),
    'swap-xy': line('M1 5l5 6M6 5l-5 6M10 5l2.500 3L15 5M12.500 8v3', GRAY, 1.500) + line('M3 3q5-4 9 0v-3M13 13q-5 4-9 0v3', GRAY, 1.500),
    'speed': line('M1.500 1v14M1 14.500h14', GRAY) + dot(12, 2.500, 1.500, '#808890') + line('M11 4L8 9l3 3M8 8l-3 3M10 5H6L5 7M11 6l3 1', '#808890', 1.800),
    'layers-1': line('M.5.5h15v15H.5zM3 3v3.500h10M3 9v3.500h4M9 9v3.500h4', GRAY),
    'layers-2': line('M.5 1.500h15v5H.5zM.5 9.500h6v6h-6zM9.500 9.500h6v6h-6zM3 3v2h3M9 3v2h3M3 11v3h2M12 11v3h2', GRAY, 1.300),
    'layers-3': line('M.5.5h6v6h-6zM9.500.5h6v6h-6zM.5 10.500h15v5H.5zM3 2v2.500h2M12 2v2.500h2M4 12v1.500h3M10 12v1.500h3', '#000', 1.300),
    'layers-4': line('M.5 1.500h15v5H.5zM1 2l4 3 4-2 6 2M.5 8.500h9v5h-9zM4.500 10.500h11v5h-11zM6 11l3 3 5-3', GRAY, 1.300),
    'align-left': line('M1.500 1v14M4.500 1.500h7v5h-7zM4.500 9.500h10v5h-10z', GRAY),
    'align-right': line('M14.500 1v14M5.500 1.500h6v5h-6zM2.500 9.500h9v5h-9z', GRAY),
    'align-top': line('M1 1.500h14M1.500 4.500h5v10h-5zM9.500 4.500h5v6h-5z', GRAY),
    'align-bottom': line('M1 14.500h14M1.500 1.500h5v10h-5zM9.500 5.500h5v6h-5z', GRAY),
    'align-center': line('M7.500 1v14M4.500 2.500h6v4h-6zM2.500 9.500h10v4h-10z', GRAY),
    'align-middle': line('M0 8.500h15M2.500 5.500h4v6h-4zM8.500 2.500h6v11h-6z', GRAY)
};

// dotted frames used by the layer buttons
const frame = (solid, extra = '') => line(solid, GRAY) + `<path d="M4.500 2v10M4 11.500h10" stroke="${GRAY}" stroke-dasharray="1 2" fill="none"/>` + extra;
icons['frame-l'] = frame('M2.500 2v11.500H14');
icons['frame-c'] = frame('M14 2.500H2.500v11H14');
icons['frame-u'] = frame('M2.500 2v11.500h11V2');
icons['frame-d'] = frame('M2.500 2.500h11v11h-11z');
icons['frame-i'] = frame('M2.500 2v11.500H14', line('M9.500 9V3.500H14', GRAY, 1.500));
icons['frame-s'] = frame('M2.500 2v11.500H14', line('M8.500 2v6H14M10 6l4-4', GRAY, 1.300));

function makeTool(entry) {
    const name = entry.replace(/[~*]/g, '');
    const label = name.replace(/-/g, ' ');
    const item = document.createElement('span');
    item.className = 'item';
    item.innerHTML = `<button type="button" class="tool${entry.includes('*') ? ' active' : ''}" aria-label="${label}">` +
        `<svg width="16" height="16" viewBox="0 0 16 16">${icons[name]}</svg></button>`;
    if (entry.includes('~')) {
        item.innerHTML += `<button type="button" class="drop" aria-label="${label} options"></button>`;
    }
    return item;
}

document.querySelectorAll('.tools[data-tools]').forEach(box => {
    box.dataset.tools.trim().split(/\s+/).forEach(entry => {
        if (entry === '|') {
            const separator = document.createElement('span');
            separator.className = 'separator';
            box.appendChild(separator);
        } else {
            box.appendChild(makeTool(entry));
        }
    });
});

// overflow buttons at the end of every toolbar
const moreArrow = '<svg width="7" height="8"><path d="M2 2.500h5M2 5h5L4.500 8z" fill="#fff" stroke="#fff"/><path d="M1 1.500h5" stroke="#000"/><path d="M1 4h5L3.500 7z"/></svg>';
document.querySelectorAll('.more').forEach(button => {
    if (button.classList.contains('side')) {
        button.innerHTML = '<svg width="8" height="8"><path d="M1.500 1v6" stroke="#000"/><path d="M4 1v6l3-3z"/></svg>';
    } else {
        button.innerHTML = (button.classList.contains('wide') ? '<svg width="8" height="6"><path d="M0 .5v5L3 3zM4 .5v5L7 3z"/></svg>' : '') + moreArrow;
    }
});
```
FILE: rose.js
```js
// wind rose: cumulative percentages per direction, one value per speed range
const colors = ['#79b15f', '#3982c4', '#f07023', '#ffd500', '#8b8bc2', '#e46265'];
const ranges = ['0 - 2', '2 - 4', '4 - 6', '6 - 8', '8 - 10', '>= 10'];
const winds = [
    [2.1, 2.95, 3.3, 3.4],
    [1.4, 2.1],
    [1.97, 3.7, 3.9],
    [2.33, 5.25, 6.1, 6.25],
    [3.73, 7.84, 9.05, 9.5],
    [1.78, 4.2, 5.0, 5.1],
    [1.6, 8.42, 12.85, 13.2],
    [1.74, 5.06, 5.9],
    [1.47, 2.2],
    [2.36, 3.4],
    [4.85, 11.1, 12.1],
    [3.1, 6.17, 6.7],
    [2.0, 5.84, 6.65],
    [2.1, 4.74, 5.85, 6.5, 6.6],
    [2.2, 5.25, 6.9, 7.6, 7.7],
    [1.75, 3.5, 4.0, 4.25]
];
const compass = [
    ['N', 356, 58], ['NNE', 455, 74], ['NE', 517, 120], ['ENE', 569, 188],
    ['E', 573, 279], ['ESE', 569, 369], ['SE', 517, 438], ['SSE', 454, 483],
    ['SSW', 257, 483], ['SW', 194, 438], ['WSW', 140, 369],
    ['W', 137, 279], ['WNW', 140, 188], ['NW', 193, 120], ['NNW', 256, 74]
];

const cx = 357.5;
const cy = 273.5;
const hole = 26.5;
const radius = 203;
const scale = (radius - hole) / 16;
const half = 5.6;

function point(angle, r) {
    const a = angle * Math.PI / 180;
    return (cx + r * Math.sin(a)).toFixed(2) + ' ' + (cy - r * Math.cos(a)).toFixed(2);
}

let out = '';

// grid
for (let v = 2; v < 16; v += 2) {
    out += `<circle cx="${cx}" cy="${cy}" r="${hole + v * scale}" fill="none" stroke="#c6c6c6"/>`;
}
for (let i = 0; i < 16; i++) {
    out += `<path d="M${point(i * 22.5, hole)}L${point(i * 22.5, radius)}" stroke="#c6c6c6"/>`;
}
out += `<circle cx="${cx}" cy="${cy}" r="${radius}" fill="none" stroke="#000"/>`;
for (let i = 0; i < 32; i++) {
    out += `<path d="M${point(i * 11.25, radius)}L${point(i * 11.25, radius - (i % 2 ? 4 : 8))}" stroke="#000"/>`;
}

// bars
winds.forEach((values, i) => {
    const a = i * 22.5;
    let from = hole;
    values.forEach((value, k) => {
        const to = hole + value * scale;
        out += `<path d="M${point(a - half, from)}L${point(a - half, to)}L${point(a + half, to)}L${point(a + half, from)}z" fill="${colors[k]}" stroke="#111"/>`;
        from = to;
    });
    // the sparse top ranges show up as a thicker outer edge
    out += `<path d="M${point(a - half, from)}L${point(a + half, from)}" stroke="#111" stroke-width="2"/>`;
});

// vertical axis
out += `<path d="M${cx} ${cy - hole}V${cy - radius}" stroke="#000" stroke-width="1.500"/>`;
out += '<g class="scale">';
for (let v = 0; v <= 16; v += 2) {
    const y = cy - hole - v * scale;
    out += `<path d="M${cx - 3} ${y}h6" stroke="#000"/><text x="353" y="${Math.round(y) + 4}">${v}%</text>`;
}
out += '</g>';

out += '<g class="compass">' + compass.map(([t, x, y]) => `<text x="${x}" y="${y}">${t}</text>`).join('') + '</g>';
out += '<g class="calms"><text x="331" y="270">Calms:</text><text x="331" y="284">0.18861%</text></g>';

// legend
out += '<g class="legend"><path d="M591.500 18.500h100v141h-100z" fill="#fff" stroke="#000"/>';
ranges.forEach((label, i) => {
    const y = 136.5 - i * 23;
    out += `<rect x="594.500" y="${y}" width="41" height="20" fill="${colors[i]}" stroke="#000"/><text x="641" y="${y + 16}">${label}</text>`;
});
out += '</g>';

// highlighted mouse pointer
out += '<circle class="halo" cx="476" cy="342" r="32"/>';
out += '<path d="M475 341.500v22l5-5 4 9 4-2-4-8h7z" fill="#fff" stroke="#000" stroke-width="1.500"/>';

document.getElementById('rose').innerHTML = out;
```
